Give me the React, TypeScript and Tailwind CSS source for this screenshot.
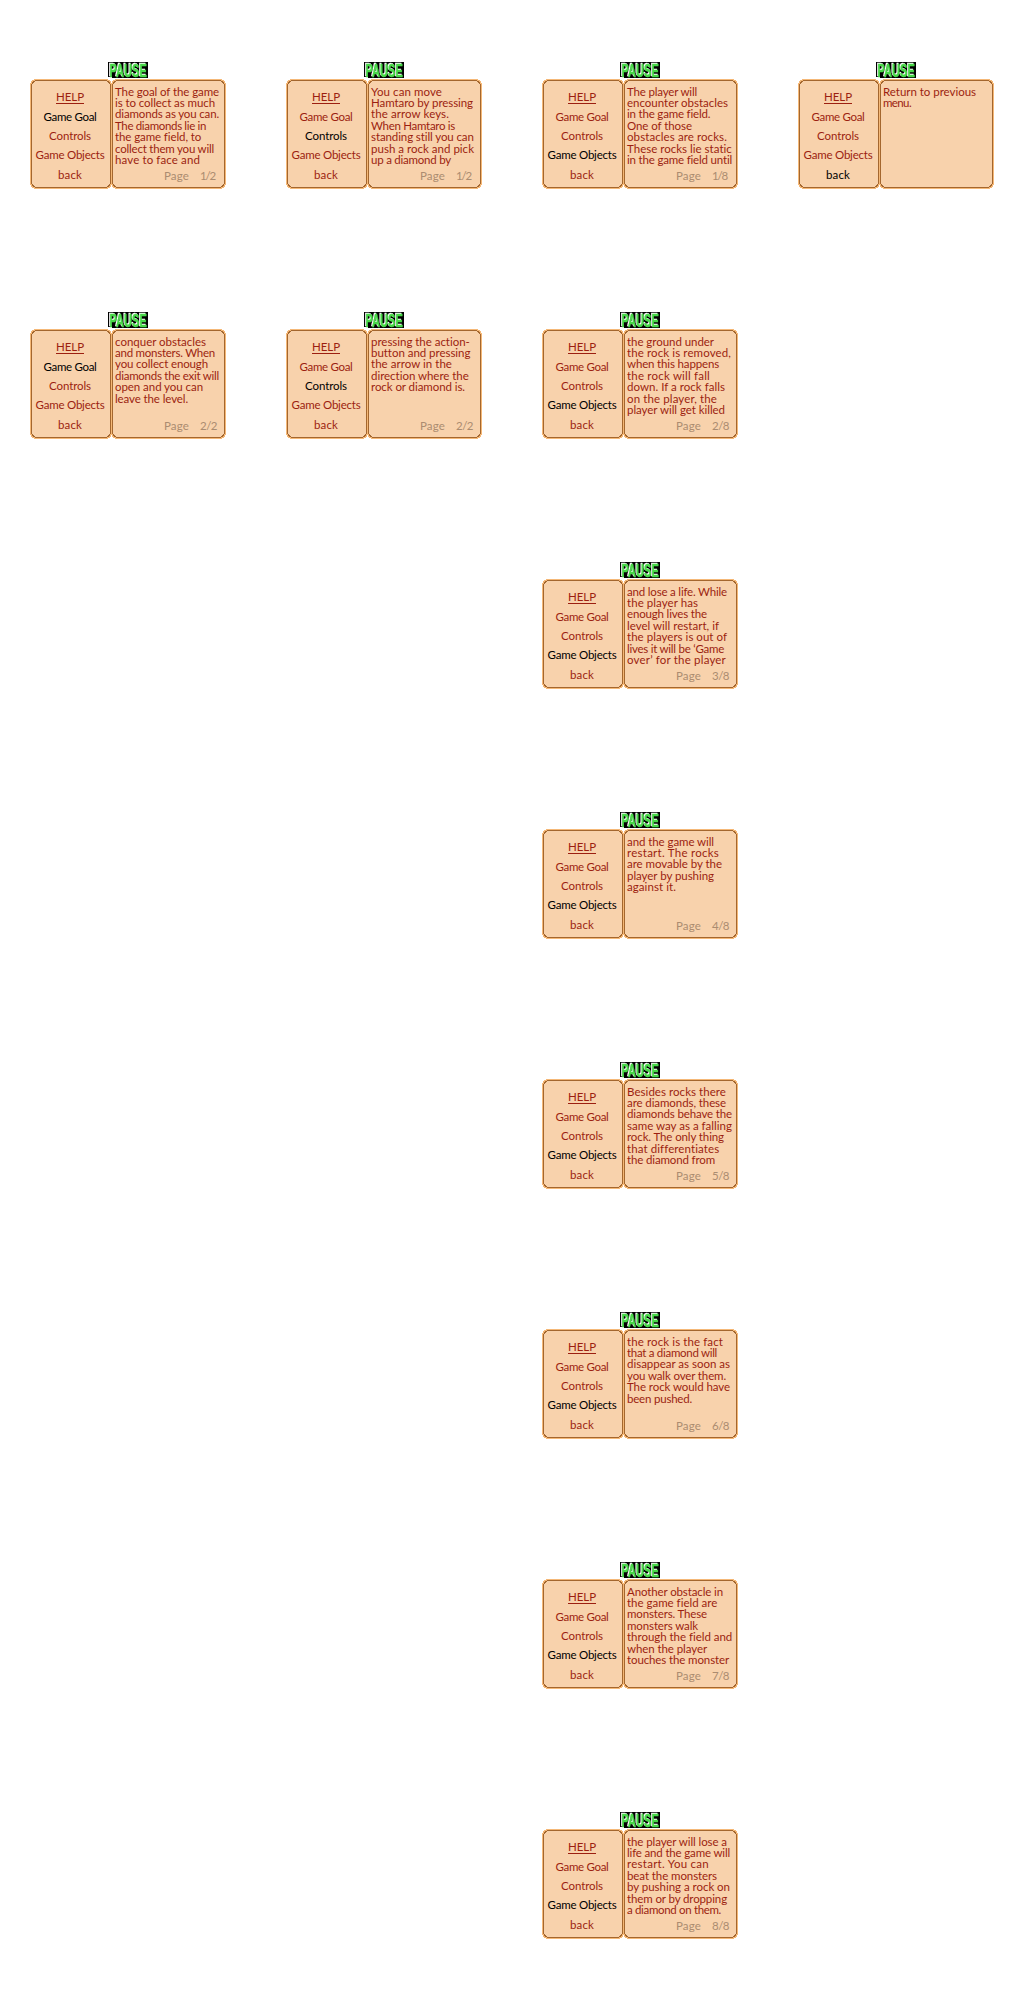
import { useLayoutEffect, useRef } from "react";

type Page = { selected: number; lines: [string, number][]; page?: string };

const pages: (Page | null)[] = [
  { selected: 0, page: "1/2", lines: [["The goal of the game", 104], ["is to collect as much", 100], ["diamonds as you can.", 104], ["The diamonds lie in", 91], ["the game field, to", 86], ["collect them you will", 99], ["have to face and", 85]] },
  { selected: 1, page: "1/2", lines: [["You can move", 71], ["Hamtaro by pressing", 102], ["the arrow keys.", 78], ["When Hamtaro is", 84], ["standing still you can", 103], ["push a rock and pick", 103], ["up a diamond by", 80]] },
  { selected: 2, page: "1/8", lines: [["The player will", 70], ["encounter obstacles", 101], ["in the game field.", 83], ["One of those", 65], ["obstacles are rocks.", 100], ["These rocks lie static", 105], ["in the game field until", 105]] },
  { selected: 3, lines: [["Return to previous", 93], ["menu.", 28]] },
  { selected: 0, page: "2/2", lines: [["conquer obstacles", 91], ["and monsters. When", 100], ["you collect enough", 93], ["diamonds the exit will", 104], ["open and you can", 88], ["leave the level.", 73]] },
  { selected: 1, page: "2/2", lines: [["pressing the action-", 99], ["button and pressing", 99], ["the arrow in the", 81], ["direction where the", 98], ["rock or diamond is.", 94]] },
  { selected: 2, page: "2/8", lines: [["the ground under", 87], ["the rock is removed,", 104], ["when this happens", 92], ["the rock will fall", 83], ["down. If a rock falls", 98], ["on the player, the", 90], ["player will get killed", 98]] },
  null, null, null,
  { selected: 2, page: "3/8", lines: [["and lose a life. While", 100], ["the player has", 71], ["enough lives the", 80], ["level will restart, if", 92], ["the players is out of", 100], ["lives it will be ‘Game", 97], ["over’ for the player", 99]] },
  null, null, null,
  { selected: 2, page: "4/8", lines: [["and the game will", 87], ["restart. The rocks", 92], ["are movable by the", 95], ["player by pushing", 87], ["against it.", 49]] },
  null, null, null,
  { selected: 2, page: "5/8", lines: [["Besides rocks there", 99], ["are diamonds, these", 99], ["diamonds behave the", 105], ["same way as a falling", 105], ["rock. The only thing", 97], ["that differentiates", 92], ["the diamond from", 88]] },
  null, null, null,
  { selected: 2, page: "6/8", lines: [["the rock is the fact", 96], ["that a diamond will", 90], ["disappear as soon as", 103], ["you walk over them.", 99], ["The rock would have", 103], ["been pushed.", 65]] },
  null, null, null,
  { selected: 2, page: "7/8", lines: [["Another obstacle in", 96], ["the game field are", 90], ["monsters. These", 80], ["monsters walk", 71], ["through the field and", 105], ["when the player", 80], ["touches the monster", 102]] },
  null, null, null,
  { selected: 2, page: "8/8", lines: [["the player will lose a", 100], ["life and the game will", 103], ["restart. You can", 82], ["beat the monsters", 90], ["by pushing a rock on", 103], ["them or by dropping", 100], ["a diamond on them.", 94]] },
];

const menu: [string, number][] = [["Game Goal", 53], ["Controls", 42], ["Game Objects", 69], ["back", 24]];

/** One line of text, tracked out to an exact pixel width. */
function Fit({ text, width }: { text: string; width: number }) {
  const ref = useRef<HTMLSpanElement>(null);
  useLayoutEffect(() => {
    const fit = () => {
      const el = ref.current;
      if (!el) return;
      el.style.letterSpacing = "0px";
      const natural = el.getBoundingClientRect().width;
      el.style.letterSpacing = `${(width - natural) / text.length}px`;
    };
    fit();
    document.fonts.ready.then(fit);
  }, [text, width]);
  return <span ref={ref} className="inline-block whitespace-pre">{text}</span>;
}

/** Stepped-corner panel border. */
function Frame({ w }: { w: number }) {
  const r = w - 1;
  const outer = `M4 0H${w - 4}V1H${w - 2}V2H${r}V4H${w}V106H${r}V108H${w - 2}V109H${w - 4}V110H4V109H2V108H1V106H0V4H1V2H2V1H4Z`;
  const dark = `M5 1H${w - 5}V2H${w - 3}V3H${w - 2}V5H${r}V105H${w - 2}V107H${w - 3}V108H${w - 5}V109H5V108H3V107H2V105H1V5H2V3H3V2H5Z`;
  const inner = `M5 2H${w - 5}V3H${w - 4}V4H${w - 3}V5H${w - 2}V105H${w - 3}V106H${w - 4}V107H${w - 5}V108H5V107H4V106H3V105H2V5H3V4H4V3H5Z`;
  return (
    <svg className="absolute inset-0" width={w} height={110} shapeRendering="crispEdges">
      <path d={outer} fill="#f5b877" />
      <path d={dark} fill="#a4672f" />
      <path d={inner} fill="#f8d2ac" />
    </svg>
  );
}

function PauseLogo() {
  return (
    <svg className="ml-[78px] block h-[17px] w-10 overflow-visible font-['Liberation_Sans',sans-serif] font-bold" viewBox="0 0 40 17">
      <path d="M0 0H40V16H4V15H0Z" fill="#000" />
      <text
        x="1.4"
        y="14.7"
        fontSize="18.5"
        textLength="37.4"
        lengthAdjust="spacingAndGlyphs"
        fill="#48d848"
        stroke="#48d848"
        strokeWidth="0.5"
        className="[filter:drop-shadow(-0.5px_-0.6px_0_#fff)]"
      >
        PAUSE
      </text>
    </svg>
  );
}

function Screen({ selected, lines, page }: Page) {
  return (
    <div className="flex h-[250px] w-64 flex-col pt-[62px] pl-[30px] text-[#9c1f10]">
      <PauseLogo />
      <div className="flex">
        <div className="relative h-[110px] w-[82px]">
          <Frame w={82} />
          <div className="relative flex flex-col items-center pt-[9px] pr-0.5 text-[11.5px]">
            <span className="mb-[3.6px] h-4 border-b border-[#9c1f10] leading-[17px]"><Fit text="HELP" width={28} /></span>
            {menu.map(([label, width], i) => (
              <span key={label} className={`h-[19.4px] leading-[17px] ${i === selected ? "text-black" : ""}`}><Fit text={label} width={width} /></span>
            ))}
          </div>
        </div>
        <div className="relative -ml-px h-[110px] w-[115px]">
          <Frame w={115} />
          <div className="relative h-[90px] pt-[6.5px] pl-1 text-[11.5px] leading-[11.45px]">
            {lines.map(([text, width]) => <div key={text} className="h-[11.45px]"><Fit text={text} width={width} /></div>)}
          </div>
          {page && (
            <div className="relative flex gap-[11px] pl-[53px] text-[11.5px] leading-[14px] text-[#ab8c70]">
              <Fit text="Page" width={25} />
              <Fit text={page} width={page.startsWith("1") ? 15 : 17} />
            </div>
          )}
        </div>
      </div>
    </div>
  );
}

export default function App() {
  return (
    <main className="grid h-[2000px] w-[1024px] grid-cols-4 auto-rows-[250px] overflow-hidden bg-white font-['Lato',sans-serif]">
      {pages.map((p, i) => (p ? <Screen key={i} {...p} /> : <div key={i} />))}
    </main>
  );
}
